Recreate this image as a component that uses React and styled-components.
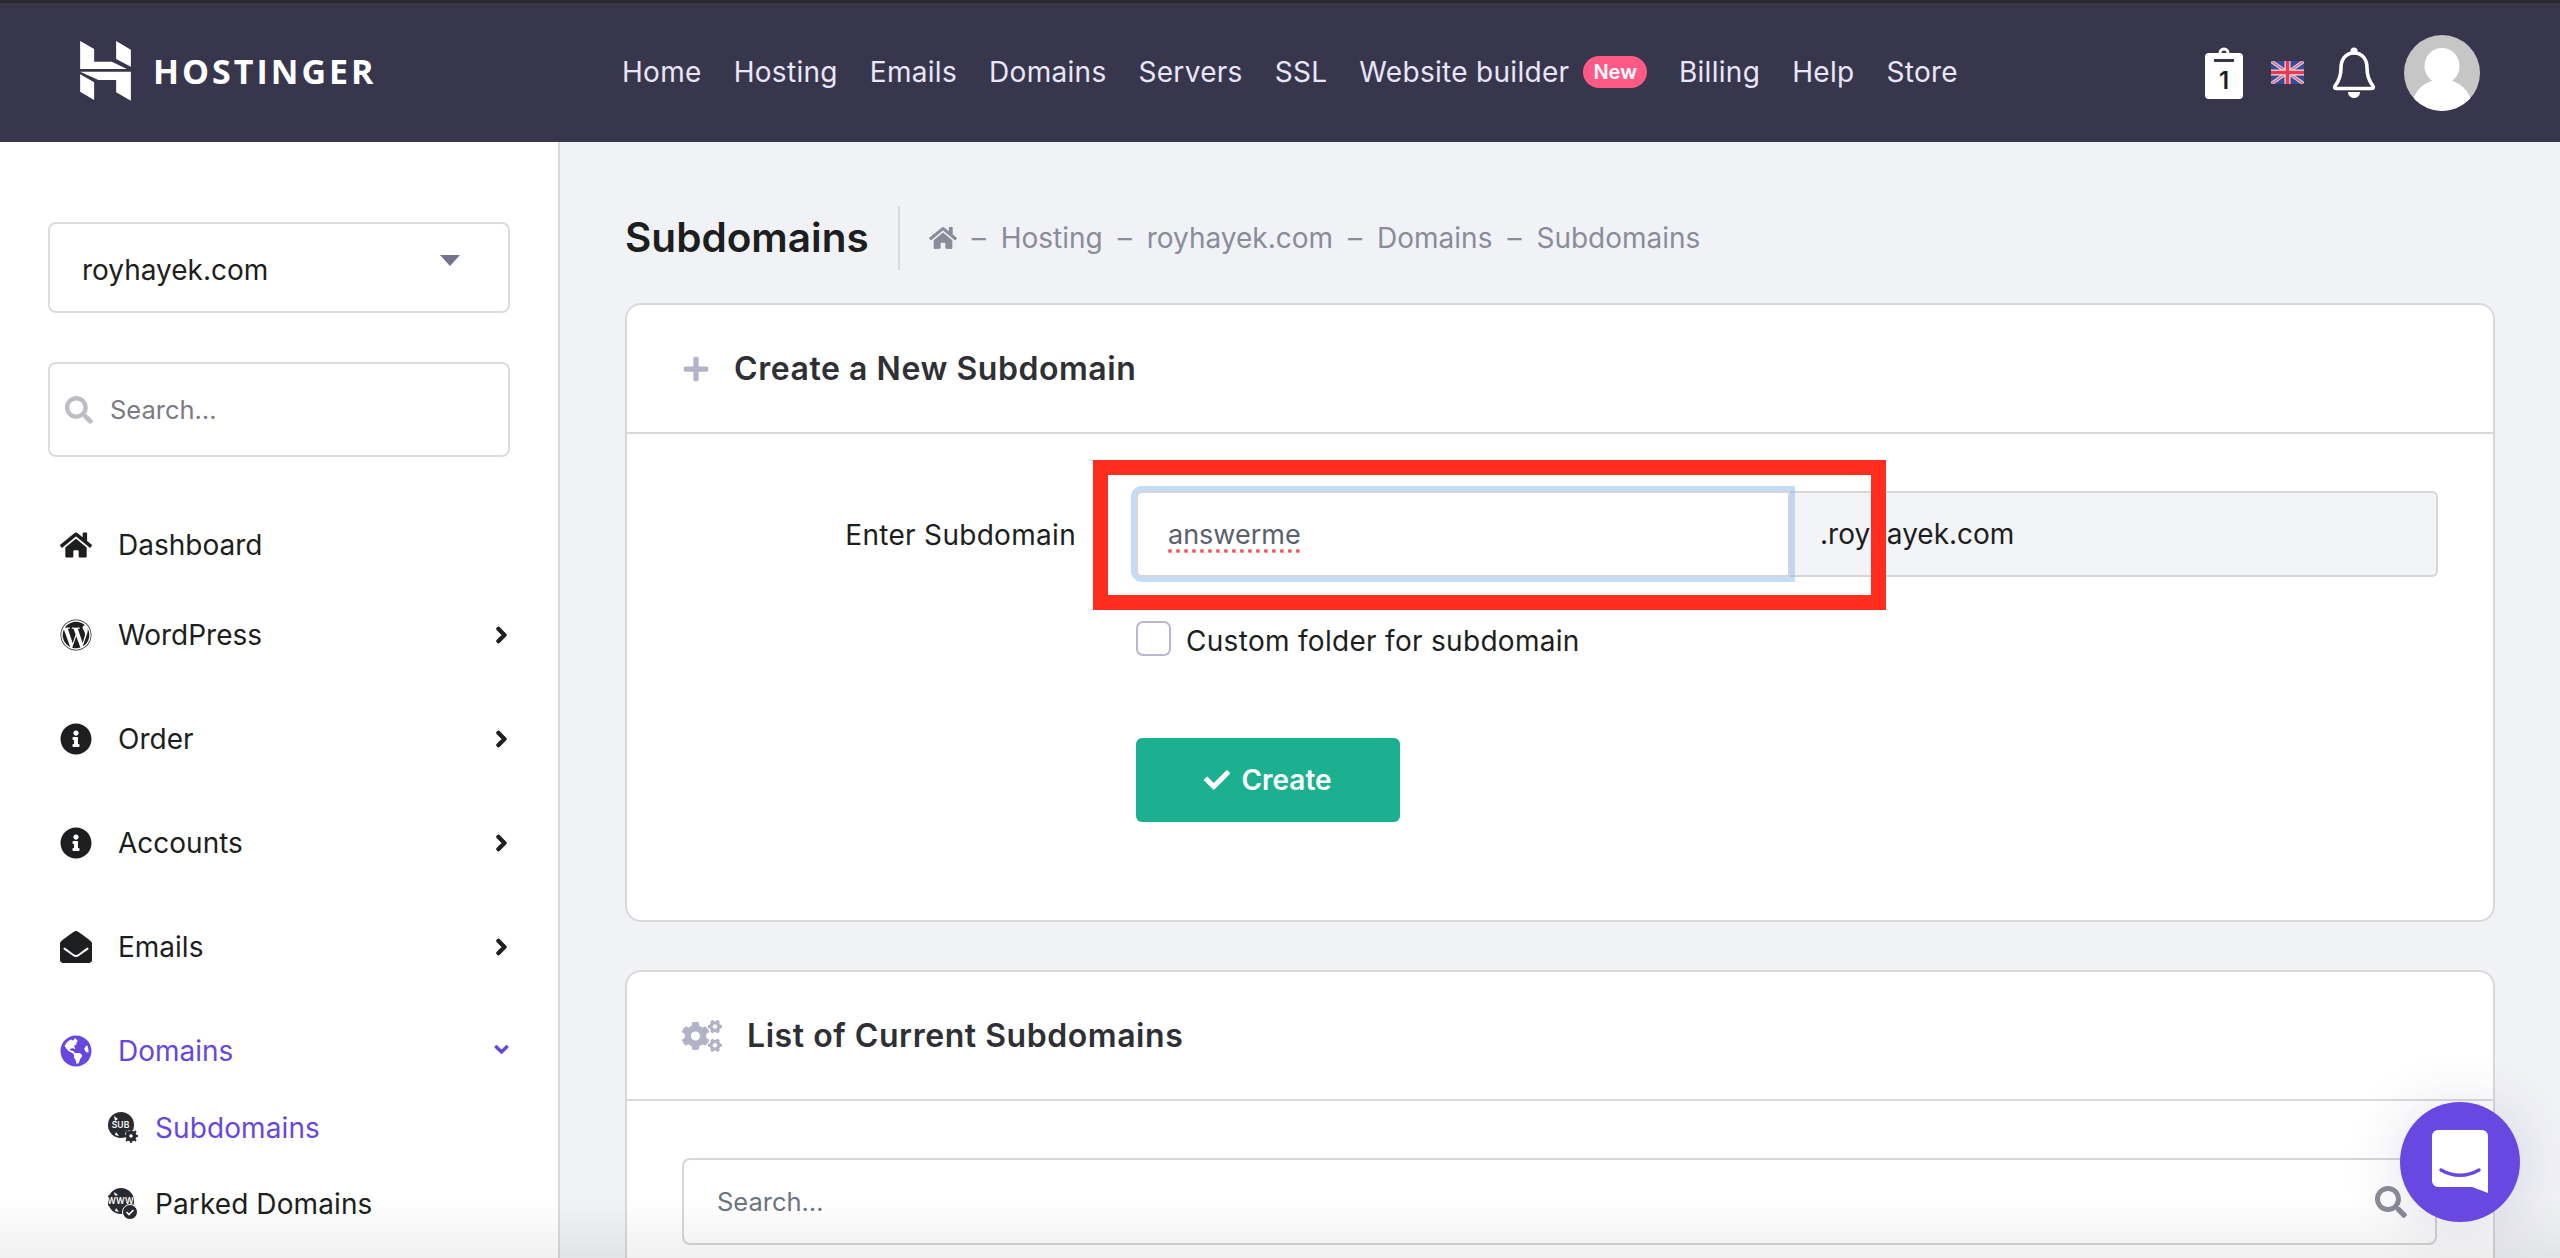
import React from "react";
import styled, { createGlobalStyle } from "styled-components";
import {
  FaHome,
  FaWordpress,
  FaInfoCircle,
  FaEnvelopeOpen,
  FaGlobeAmericas,
  FaChevronRight,
  FaChevronDown,
  FaSearch,
  FaPlus,
  FaCheck,
  FaCogs,
} from "react-icons/fa";

const GlobalStyle = createGlobalStyle`
  html, body { margin: 0; padding: 0; background: #f1f2f6; }
  * { box-sizing: border-box; }
  body { font-family: "Inter", "Noto Sans", sans-serif; color: #1d1e20; }
`;

const Page = styled.div`
  position: relative;
  width: 2560px;
  height: 1258px;
  overflow: hidden;
  background: #f1f2f6;
`;

const Header = styled.header`
  display: flex;
  align-items: center;
  height: 142px;
  padding-left: 80px;
  background: #38364d;
  border-top: 3px solid #2b2b2e;
`;

const LogoLink = styled.div`
  display: flex;
  align-items: center;
  gap: 22px;
  width: 542px;
  margin-top: -3px;
  color: #fff;
`;

const LogoText = styled.span`
  font-family: "Open Sans", sans-serif;
  font-weight: 700;
  font-size: 34px;
  letter-spacing: 3px;
`;

const TopNav = styled.nav`
  display: flex;
  align-items: center;
  gap: 32px;
  margin-top: -1px;
`;

const TopLink = styled.a`
  display: flex;
  align-items: center;
  gap: 14px;
  font-size: 28px;
  letter-spacing: 0.3px;
  color: #e9e6f7;
  white-space: nowrap;
`;

const NewBadge = styled.span`
  padding: 0 10px;
  height: 32px;
  line-height: 32px;
  border-radius: 16px;
  background: #ff5a85;
  color: #fff;
  font-size: 20px;
  font-weight: 600;
  letter-spacing: 0;
`;

const HeaderIcons = styled.div`
  display: flex;
  align-items: center;
  margin-left: auto;
  margin-right: 80px;
  gap: 28px;
`;

const Body = styled.div`
  display: grid;
  grid-template-columns: 560px 1fr;
  height: 1116px;
`;

const Sidebar = styled.aside`
  background: #fff;
  border-right: 2px solid #dadade;
  padding: 80px 48px 0;
  overflow: hidden;
`;

const DomainSelect = styled.div`
  display: flex;
  align-items: center;
  justify-content: space-between;
  height: 91px;
  padding: 4px 48px 0 32px;
  border: 2px solid #dcdcdf;
  border-radius: 8px;
  font-size: 28px;
`;

const Caret = styled.span`
  width: 0;
  height: 0;
  margin-top: -18px;
  border-left: 10px solid transparent;
  border-right: 10px solid transparent;
  border-top: 11px solid #73738a;
`;

const SideSearch = styled.div`
  display: flex;
  align-items: center;
  gap: 17px;
  height: 95px;
  margin-top: 49px;
  padding-left: 15px;
  border: 2px solid #dcdcdf;
  border-radius: 8px;
  font-size: 25.5px;
  color: #7b7b84;

  svg { color: #bdbdc6; width: 28px; height: 28px; }
`;

const SideNav = styled.nav`
  display: flex;
  flex-direction: column;
  gap: 40px;
  margin-top: 56px;
`;

const SideItem = styled.a`
  display: flex;
  align-items: center;
  height: 64px;
  padding-left: 12px;
  font-size: 28px;
  color: ${(p) => (p.$active ? "#6747e0" : "#1d1e20")};
  margin-bottom: ${(p) => (p.$tight ? "-14px" : "0")};

  > svg:first-child { width: 32px; height: 32px; margin-right: 26px; flex: none; }
  > svg:last-child:not(:first-child) {
    width: 13px;
    height: 18px;
    margin-left: auto;
    margin-right: 2px;
    stroke: currentColor;
    stroke-width: 40px;
  }
  > svg.down { width: 23px !important; height: 15px !important; margin-right: -3px !important; margin-top: -4px; }
`;

const SubList = styled.div`
  margin-top: -33px;
`;

const SubItem = styled.a`
  display: flex;
  align-items: center;
  height: 76px;
  padding-left: 60px;
  gap: 17px;
  font-size: 28px;
  letter-spacing: 0.1px;
  color: ${(p) => (p.$active ? "#6747e0" : "#1d1e20")};
`;

const Main = styled.main`
  padding: 64px 65px 0;
  overflow: hidden;
`;

const TitleRow = styled.div`
  display: flex;
  align-items: center;
  height: 64px;
`;

const PageTitle = styled.h1`
  margin: 0;
  padding-right: 29px;
  font-size: 40.5px;
  font-weight: 600;
  color: #1d1e20;
  border-right: 2px solid #d8d9dd;
  height: 64px;
  line-height: 64px;
`;

const Crumbs = styled.div`
  display: flex;
  align-items: center;
  gap: 15px;
  margin-left: 29px;
  font-size: 28px;
  color: #8a8c9a;

  svg { width: 28px; height: 26px; }
`;

const Card = styled.section`
  border: 2px solid #d9d9dc;
  border-radius: 16px;
  background: #fff;
  margin-top: ${(p) => p.$top}px;
  height: ${(p) => p.$height}px;
`;

const CardHead = styled.div`
  display: flex;
  align-items: center;
  height: 129px;
  padding-left: 55px;
  gap: ${(p) => p.$gap}px;
  border-bottom: 2px solid #d9d9dc;
  font-size: 32px;
  font-weight: 600;
  letter-spacing: 0.55px;
  color: #2f3035;

  svg { color: #b3b3c8; flex: none; }
`;

const FormGrid = styled.div`
  display: grid;
  grid-template-columns: 449px 1302px;
  column-gap: 60px;
  padding-top: 57px;
`;

const FieldLabel = styled.label`
  height: 86px;
  line-height: 88px;
  text-align: right;
  font-size: 28px;
  letter-spacing: 0.3px;
`;

const InputGroup = styled.div`
  position: relative;
  display: flex;
  height: 86px;
`;

const FocusedInput = styled.div`
  position: relative;
  z-index: 1;
  flex: none;
  width: 654px;
  padding-left: 30px;
  line-height: 84px;
  font-size: 27px;
  color: #5b606e;
  border: 2px solid #d6d6d9;
  border-radius: 6px 0 0 6px;
  box-shadow: 0 0 0 5px rgba(128, 180, 240, 0.47);
  background: #fff;
`;

const Squiggle = styled.span`
  text-decoration: underline dotted #f4595c 4px;
  text-underline-offset: 5px;
`;

const Addon = styled.div`
  flex: 1;
  padding-left: 30px;
  line-height: 82px;
  font-size: 28px;
  background: #f3f4f8;
  border: 2px solid #d6d6d9;
  border-left: 0;
  border-radius: 0 6px 6px 0;
`;

const RedFrame = styled.div`
  position: absolute;
  z-index: 2;
  left: -43px;
  top: -31px;
  width: 793px;
  height: 150px;
  border: 15px solid #ff2d20;
`;

const CheckRow = styled.div`
  display: flex;
  align-items: center;
  gap: 15px;
  margin-top: 42px;
  font-size: 28px;
  letter-spacing: 0.3px;

  > span:last-child { padding-top: 5px; }
`;

const CheckBox = styled.span`
  width: 35px;
  height: 35px;
  border: 2px solid #b9b8d0;
  border-radius: 7px;
`;

const CreateButton = styled.button`
  display: flex;
  align-items: center;
  justify-content: center;
  gap: 11px;
  width: 264px;
  height: 84px;
  margin-top: 80px;
  border: 0;
  border-radius: 6px;
  background: #1bb08f;
  color: #fff;
  font-family: inherit;
  font-size: 28px;
  font-weight: 600;
`;

const ListSearchWrap = styled.div`
  padding: 57px 56px 0 55px;
`;

const ListSearch = styled.div`
  display: flex;
  align-items: center;
  justify-content: space-between;
  height: 87px;
  padding: 0 28px 0 33px;
  border: 2px solid #d6d6d9;
  border-radius: 8px;
  font-size: 25.5px;
  color: #6c7480;

  svg { color: #8b8d98; width: 32px; height: 32px; }
`;

const ChatBubble = styled.div`
  position: absolute;
  z-index: 4;
  left: 2400px;
  top: 1102px;
  display: flex;
  align-items: center;
  justify-content: center;
  width: 120px;
  height: 120px;
  border-radius: 50%;
  background: #6848e0;
  box-shadow: 0 4px 60px rgba(60, 50, 110, 0.16);
`;

const BottomFade = styled.div`
  position: absolute;
  z-index: 3;
  left: 0;
  right: 0;
  bottom: 0;
  height: 60px;
  pointer-events: none;
  background: linear-gradient(to bottom, rgba(0, 0, 0, 0), rgba(0, 0, 0, 0.06));
`;

function LogoMark() {
  return (
    <svg width="51" height="60" viewBox="10 12 50.700 60" fill="#fff">
      <polygon points="10,12 24,20 24,32.7 41.7,32.7 56.7,40 10,40" />
      <polygon points="46,12 60.7,20.7 60.7,37.7 46,30" />
      <polygon points="10,42.7 60.7,42.7 60.7,71.7 46,63.3 46,51 28.3,51" />
      <polygon points="10,45.3 24,53.3 24,71 10,62.7" />
    </svg>
  );
}

function ClipboardIcon() {
  return (
    <svg width="38" height="52" viewBox="0 0 38 52">
      <circle cx="19" cy="6" r="4" fill="none" stroke="#fff" strokeWidth="3" />
      <rect y="6" width="38" height="46" rx="4" fill="#fff" />
      <rect x="9" y="12" width="20" height="3" fill="#38364d" />
      <text x="19" y="42" textAnchor="middle" fontSize="24" fontWeight="600" fontFamily="Inter" fill="#1d1e20">
        1
      </text>
    </svg>
  );
}

function FlagIcon() {
  return (
    <svg width="33" height="23" viewBox="0 0 33 23">
      <rect width="33" height="23" fill="#3a4a94" />
      <path d="M0 0L33 23M33 0L0 23" stroke="#d8d4e6" strokeWidth="3.500" />
      <path d="M0 0L33 23M33 0L0 23" stroke="#e2607a" strokeWidth="1.400" />
      <path d="M16.500 0V23M0 11.500H33" stroke="#f0dfe6" strokeWidth="6" />
      <path d="M16.500 0V23M0 11.500H33" stroke="#e83a50" strokeWidth="3.600" />
    </svg>
  );
}

function BellIcon() {
  return (
    <svg width="44" height="52" viewBox="0 0 44 52">
      <circle cx="22" cy="4" r="3.600" fill="#fff" />
      <path
        d="M22 6C13 6 9 13 9 21c0 8-2 13-6 18-1 1.600 0 2.500 1.500 2.500h35c1.500 0 2.500-.9 1.500-2.500-4-5-6-10-6-18 0-8-4-15-13-15z"
        fill="none"
        stroke="#fff"
        strokeWidth="3.600"
        strokeLinejoin="round"
      />
      <path d="M16 45h12c0 3.500-2.500 6-6 6s-6-2.500-6-6z" fill="#fff" />
    </svg>
  );
}

function AvatarIcon() {
  return (
    <svg width="76" height="76" viewBox="0 0 76 76">
      <defs>
        <clipPath id="avatarClip">
          <circle cx="38" cy="38" r="38" />
        </clipPath>
      </defs>
      <circle cx="38" cy="38" r="38" fill="#c6c6c6" />
      <g clipPath="url(#avatarClip)" fill="#fff">
        <ellipse cx="38" cy="31" rx="17.500" ry="18" />
        <ellipse cx="38" cy="72" rx="30" ry="28" />
      </g>
    </svg>
  );
}

function SubGlobeIcon({ label, badge }) {
  return (
    <svg width="30" height="32" viewBox="0 0 30 32">
      <circle cx="13" cy="13" r="13" fill="#2a2b30" />
      <path d="M6 4l4 3-3 2zM18 18l3 3-4 3zM8 20l3 4-4-1z" fill="#fff" />
      <rect x="0" y="7.500" width="25" height="10" fill={badge === "check" ? "#2a2b30" : "none"} />
      <text x="12.500" y="16" textAnchor="middle" fontSize="8.500" fontWeight="600" fontFamily="Inter" fill="#fff">
        {label}
      </text>
      {badge === "check" ? (
        <>
          <circle cx="22" cy="24" r="7.500" fill="#2a2b30" stroke="#fff" strokeWidth="1" />
          <path d="M18.500 24l2.500 2.500 4.500-4.500" fill="none" stroke="#fff" strokeWidth="1.600" />
        </>
      ) : (
        <>
          <circle cx="23" cy="24" r="6" fill="#fff" />
          <circle cx="23" cy="24" r="4" fill="none" stroke="#2a2b30" strokeWidth="3" />
          <path d="M23 17v14M16 24h14M18 19l10 10M28 19l-10 10" stroke="#2a2b30" strokeWidth="1.800" />
          <circle cx="23" cy="24" r="1.700" fill="#fff" />
        </>
      )}
    </svg>
  );
}

function ChatIcon() {
  return (
    <svg width="56" height="64" viewBox="0 0 56 64">
      <path d="M6 0h44a6 6 0 0 1 6 6v57l-16-6H6a6 6 0 0 1-6-6V6a6 6 0 0 1 6-6z" fill="#fff" />
      <path d="M9 40c12 7 26 7 38 0" fill="none" stroke="#6848e0" strokeWidth="3.500" strokeLinecap="round" />
    </svg>
  );
}

const topLinks = ["Home", "Hosting", "Emails", "Domains", "Servers", "SSL"];
const crumbs = ["Hosting", "royhayek.com", "Domains", "Subdomains"];

const sideLinks = [
  { label: "WordPress", icon: FaWordpress },
  { label: "Order", icon: FaInfoCircle },
  { label: "Accounts", icon: FaInfoCircle },
  { label: "Emails", icon: FaEnvelopeOpen },
];

function App() {
  return (
    <Page>
      <GlobalStyle />
      <Header>
        <LogoLink>
          <LogoMark />
          <LogoText>HOSTINGER</LogoText>
        </LogoLink>
        <TopNav>
          {topLinks.map((link) => (
            <TopLink key={link}>{link}</TopLink>
          ))}
          <TopLink>
            Website builder <NewBadge>New</NewBadge>
          </TopLink>
          <TopLink>Billing</TopLink>
          <TopLink>Help</TopLink>
          <TopLink>Store</TopLink>
        </TopNav>
        <HeaderIcons>
          <ClipboardIcon />
          <FlagIcon />
          <BellIcon />
          <AvatarIcon />
        </HeaderIcons>
      </Header>
      <Body>
        <Sidebar>
          <DomainSelect>
            royhayek.com
            <Caret />
          </DomainSelect>
          <SideSearch>
            <FaSearch />
            Search…
          </SideSearch>
          <SideNav>
            <SideItem $tight>
              <FaHome />
              Dashboard
            </SideItem>
            {sideLinks.map(({ label, icon: Icon }) => (
              <SideItem key={label}>
                <Icon />
                {label}
                <FaChevronRight />
              </SideItem>
            ))}
            <SideItem $active>
              <FaGlobeAmericas />
              Domains
              <FaChevronDown className="down" />
            </SideItem>
            <SubList>
              <SubItem $active>
                <SubGlobeIcon label="SUB" badge="gear" />
                Subdomains
              </SubItem>
              <SubItem>
                <SubGlobeIcon label="WWW" badge="check" />
                Parked Domains
              </SubItem>
            </SubList>
          </SideNav>
        </Sidebar>
        <Main>
          <TitleRow>
            <PageTitle>Subdomains</PageTitle>
            <Crumbs>
              <FaHome />
              {crumbs.map((crumb) => (
                <React.Fragment key={crumb}>
                  <span>–</span>
                  <span>{crumb}</span>
                </React.Fragment>
              ))}
            </Crumbs>
          </TitleRow>
          <Card $top={33} $height={619}>
            <CardHead $gap={24}>
              <FaPlus size={28} />
              Create a New Subdomain
            </CardHead>
            <FormGrid>
              <FieldLabel>Enter Subdomain</FieldLabel>
              <div>
                <InputGroup>
                  <FocusedInput>
                    <Squiggle>answerme</Squiggle>
                  </FocusedInput>
                  <Addon>.royhayek.com</Addon>
                  <RedFrame />
                </InputGroup>
                <CheckRow>
                  <CheckBox />
                  <span>Custom folder for subdomain</span>
                </CheckRow>
                <CreateButton>
                  <FaCheck size={26} />
                  Create
                </CreateButton>
              </div>
            </FormGrid>
          </Card>
          <Card $top={48} $height={400}>
            <CardHead $gap={25}>
              <FaCogs size={40} />
              List of Current Subdomains
            </CardHead>
            <ListSearchWrap>
              <ListSearch>
                Search…
                <FaSearch />
              </ListSearch>
            </ListSearchWrap>
          </Card>
        </Main>
      </Body>
      <BottomFade />
      <ChatBubble>
        <ChatIcon />
      </ChatBubble>
    </Page>
  );
}

export default App;
